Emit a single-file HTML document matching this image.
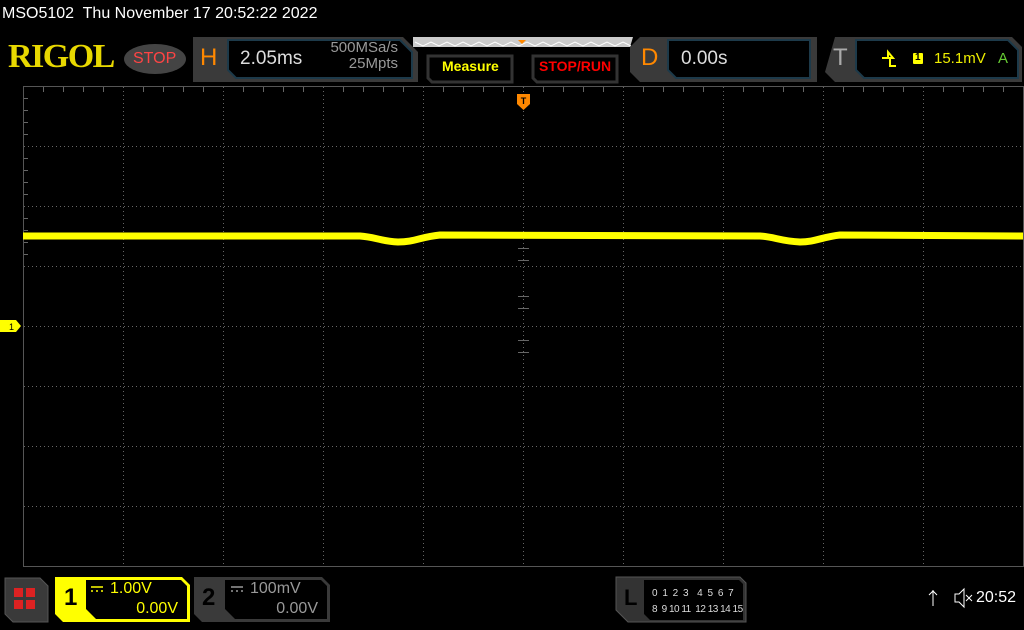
<!DOCTYPE html>
<html><head><meta charset="utf-8"><style>
body{margin:0;width:1024px;height:630px;background:#000;overflow:hidden;font-family:"Liberation Sans",sans-serif;position:relative}
.a{position:absolute}
</style></head><body>
<div class="a" style="left:2px;top:5px;color:#fff;font-size:16px">MSO5102&nbsp; Thu November 17 20:52:22 2022</div>
<svg class="a" style="left:0;top:0" width="1024" height="630">
<defs><pattern id="dh" width="4" height="1" patternUnits="userSpaceOnUse"><rect width="1" height="1" fill="#666"/></pattern></defs>
<path d="M193 37 H403 L418 52 V82 H193 Z" fill="#3a3a3a"/>
<path d="M228 40 H400 L412 52 V78 H236 L228 70 Z" fill="#000" stroke="#1d3a4a" stroke-width="2"/>
<path d="M428 56 H512 V82 H432 L428 78 Z" fill="#000" stroke="#333" stroke-width="3"/>
<path d="M533 56 H617 V82 H537 L533 78 Z" fill="#000" stroke="#333" stroke-width="3"/>
<path d="M413 37 H633 L630 47 H413 Z" fill="#ccc"/>
<path d="M415 42 l8 4 8-4 8 4 8-4 8 4 8-4 8 4 8-4 8 4 8-4 8 4 8-4 8 4 8-4 8 4 8-4 8 4 8-4 8 4 8-4 8 4 8-4 8 4 8-4 8 4 8-4 8 4" fill="none" stroke="#fff" stroke-width="1"/>
<path d="M518 40 l8 0 -4 4z" fill="#f80"/>
<path d="M640 37 H817 V82 H640 L630 72 V47 Z" fill="#3a3a3a"/>
<path d="M668 40 H810 V78 H676 L668 70 Z" fill="#000" stroke="#1d3a4a" stroke-width="2"/>
<path d="M835 37 H1012 L1022 47 V82 H835 L825 72 Z" fill="#3a3a3a"/>
<path d="M856 40 H1008 L1018 50 V78 H864 L856 70 Z" fill="#000" stroke="#1d3a4a" stroke-width="2"/>
<path d="M882 58 h6 v-6 l5 6 h-3 v8 h6" fill="none" stroke="#ff0" stroke-width="2"/>
<rect x="913" y="53" width="10" height="11" rx="1" fill="#ff0"/>
<ellipse cx="155" cy="59" rx="31" ry="15" fill="#444"/>
<rect x="23.5" y="86.5" width="1000" height="480" fill="none" stroke="#555"/>
<g fill="url(#dh)">
<rect x="23" y="146" width="1000" height="1"/><rect x="23" y="206" width="1000" height="1"/><rect x="23" y="266" width="1000" height="1"/><rect x="23" y="326" width="1000" height="1"/><rect x="23" y="386" width="1000" height="1"/><rect x="23" y="446" width="1000" height="1"/><rect x="23" y="506" width="1000" height="1"/>
</g>
<g stroke="#666" stroke-dasharray="1 3">
<path d="M123.5 87V566M223.5 87V566M323.5 87V566M423.5 87V566M523.5 87V566M623.5 87V566M723.5 87V566M823.5 87V566M923.5 87V566"/>
</g>
<g stroke="#666">
<path d="M43.5 87v5M63.5 87v5M83.5 87v5M103.5 87v5M143.5 87v5M163.5 87v5M183.5 87v5M203.5 87v5M243.5 87v5M263.5 87v5M283.5 87v5M303.5 87v5M343.5 87v5M363.5 87v5M383.5 87v5M403.5 87v5M443.5 87v5M463.5 87v5M483.5 87v5M503.5 87v5M543.5 87v5M563.5 87v5M583.5 87v5M603.5 87v5M643.5 87v5M663.5 87v5M683.5 87v5M703.5 87v5M743.5 87v5M763.5 87v5M783.5 87v5M803.5 87v5M843.5 87v5M863.5 87v5M883.5 87v5M903.5 87v5M943.5 87v5M963.5 87v5M983.5 87v5M1003.5 87v5"/>
<path d="M24 98.5h4M24 110.5h4M24 122.5h4M24 134.5h4M24 158.5h4M24 170.5h4M24 182.5h4M24 194.5h4M24 218.5h4M24 230.5h4M24 242.5h4M24 254.5h4"/>
<path d="M518 236.5h11M518 248.5h11M518 260.5h11M518 296.5h11M518 308.5h11M518 340.5h11M518 352.5h11"/>
</g>
<path d="M23 236 L360 236 C375 237 380 241 398 242 C415 242 420 237 440 235 L760 236 C775 237 780 241 800 242 C815 242 822 237 840 235 L1023 236" fill="none" stroke="#ff0" stroke-width="7"/>
<path d="M0 320 H16 L21 326 L16 332 H0Z" fill="#ff0"/>
<path d="M517 94 H530 V104 L523.5 110 L517 104Z" fill="#f80"/>
<text x="523.5" y="104" font-size="9" font-weight="bold" text-anchor="middle" fill="#000" font-family="Liberation Sans">T</text>
<text x="9" y="330" font-size="9" fill="#000" font-family="Liberation Sans">1</text>
<path d="M5 578 H40 L48 586 V622 H13 L5 614Z" fill="#3a3a3a" stroke="#555"/>
<rect x="14" y="588" width="9" height="9" fill="#d22"/><rect x="26" y="588" width="9" height="9" fill="#d22"/><rect x="14" y="600" width="9" height="9" fill="#d22"/><rect x="26" y="600" width="9" height="9" fill="#d22"/>
<path d="M55 577 H182 L190 585 V622 H63 L55 614Z" fill="#ff0"/>
<path d="M86 580 H181 L187 586 V619 H96 L86 609Z" fill="#000"/>
<path d="M194 577 H322 L330 585 V622 H202 L194 614Z" fill="#3a3a3a"/>
<path d="M225 580 H321 L327 586 V619 H235 L225 609Z" fill="#000"/>
<path d="M616 577 H740 L746 583 V622 H628 L616 610Z" fill="#333" stroke="#555"/>
<path d="M644 580 H739 L743 584 V620 H650 L644 614Z" fill="#000"/>
<path d="M91 587h12M91 591h2M96 591h2M101 591h2" stroke="#ff0" stroke-width="1.5"/>
<path d="M231 587h12M231 591h2M236 591h2M241 591h2" stroke="#999" stroke-width="1.5"/>
<path d="M933 590v16M929 595l4-4 4 4" stroke="#fff" fill="none"/>
<path d="M955 594h4l5-5v18l-5-5h-4z" stroke="#fff" fill="none"/>
<path d="M966 595l6 6M972 595l-6 6" stroke="#fff"/>
</svg>
<div class="a" style="left:8px;top:38px;color:#e8d800;font-family:'Liberation Serif',serif;font-weight:bold;font-size:34px;letter-spacing:-1.5px">RIGOL</div>
<div class="a" style="left:133px;top:50px;color:#f44;font-size:16px">STOP</div>
<div class="a" style="left:200px;top:44px;color:#f80;font-size:24px">H</div>
<div class="a" style="left:240px;top:48px;color:#ddd;font-size:19px">2.05ms</div>
<div class="a" style="left:320px;top:40px;color:#999;font-size:15px;text-align:right;width:78px;line-height:16px">500MSa/s<br>25Mpts</div>
<div class="a" style="left:442px;top:58px;color:#ff0;font-size:14px;font-weight:bold">Measure</div>
<div class="a" style="left:539px;top:58px;color:#f00;font-size:14px;font-weight:bold">STOP/RUN</div>
<div class="a" style="left:641px;top:44px;color:#f80;font-size:24px">D</div>
<div class="a" style="left:681px;top:48px;color:#ddd;font-size:19px">0.00s</div>
<div class="a" style="left:833px;top:44px;color:#aaa;font-size:24px">T</div>
<div class="a" style="left:915px;top:52px;color:#000;font-size:10px;font-weight:bold">1</div>
<div class="a" style="left:934px;top:50px;color:#ee0;font-size:15px">15.1mV</div>
<div class="a" style="left:998px;top:50px;color:#6c3;font-size:15px">A</div>
<div class="a" style="left:64px;top:584px;color:#000;font-size:24px;font-weight:bold">1</div>
<div class="a" style="left:110px;top:580px;color:#ff0;font-size:16px">1.00V</div>
<div class="a" style="left:130px;top:600px;color:#ff0;font-size:16px;width:48px;text-align:right">0.00V</div>
<div class="a" style="left:202px;top:584px;color:#000;font-size:24px;font-weight:bold">2</div>
<div class="a" style="left:250px;top:580px;color:#999;font-size:16px">100mV</div>
<div class="a" style="left:270px;top:600px;color:#999;font-size:16px;width:48px;text-align:right">0.00V</div>
<div class="a" style="left:624px;top:585px;color:#000;font-size:22px;font-weight:bold">L</div>
<div class="a" style="left:652px;top:586px;color:#ddd;font-size:10px;line-height:16px;letter-spacing:1px">0 1 2 3&nbsp; 4 5 6 7<br><span style="letter-spacing:-0.5px">8&nbsp; 9 10 11&nbsp; 12 13 14 15</span></div>
<div class="a" style="left:976px;top:589px;color:#fff;font-size:16px">20:52</div>
</body></html>
